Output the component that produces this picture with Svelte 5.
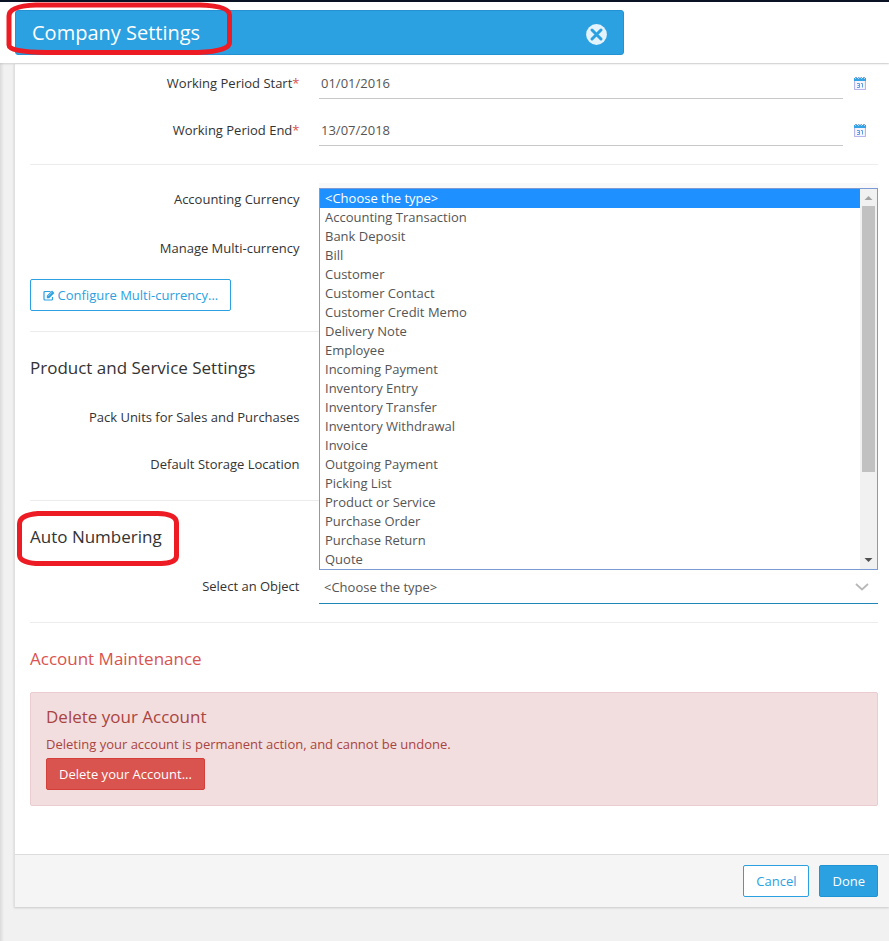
<script lang="ts">
  const objectTypes = [
    "<Choose the type>",
    "Accounting Transaction",
    "Bank Deposit",
    "Bill",
    "Customer",
    "Customer Contact",
    "Customer Credit Memo",
    "Delivery Note",
    "Employee",
    "Incoming Payment",
    "Inventory Entry",
    "Inventory Transfer",
    "Inventory Withdrawal",
    "Invoice",
    "Outgoing Payment",
    "Picking List",
    "Product or Service",
    "Purchase Order",
    "Purchase Return",
    "Quote",
  ];

  let selected = $state(objectTypes[0]);
  let periodStart = $state("01/01/2016");
  let periodEnd = $state("13/07/2018");
</script>

{#snippet calendar()}
  <svg class="calendar" width="12" height="13" viewBox="0 0 12 13" aria-hidden="true">
    <rect x="0.5" y="1.5" width="11" height="11" rx="0.5" fill="#f6f4fd" stroke="#b4b6ec" stroke-width="1.2" />
    <path d="M0 1h12v3H0z" fill="#36a3e4" />
    <path d="M1 1.5h10" stroke="#b5d6f2" stroke-dasharray="1 2" />
    <path d="M1 0.5h2M4 0.5h1.5M6.5 0.5h1.5M9 0.5h2" stroke="#7fa4d6" />
    <path d="M3 6.5h2.5v4H3M3.5 8.5h2M7 6.5h1.5v4" fill="none" stroke="#5f9fe2" />
  </svg>
{/snippet}

<div class="page">
  <header class="topbar">
    <div class="title-bar">
      <h1>Company Settings</h1>
      <button type="button" class="close" aria-label="Close">
        <svg width="21" height="21" viewBox="0 0 21 21">
          <circle cx="10.5" cy="10.5" r="10.4" fill="#e4f2fc" />
          <path d="M6 6l9 9M15 6l-9 9" stroke="#2ba1e1" stroke-width="3" stroke-linecap="round" />
        </svg>
      </button>
    </div>
    <svg class="marker marker-title" width="226" height="54" viewBox="0 0 226 54" aria-hidden="true">
      <path d="M30 3H194Q223.500 4 223.500 13V41Q223.500 49 192 50.500H40Q3 50 3 43V14Q3 4 30 3Z" />
    </svg>
  </header>

  <main class="panel">
    <div class="body">
      <div class="row">
        <label for="start">Working Period Start<i>*</i></label>
        <input id="start" bind:value={periodStart} />
        {@render calendar()}
      </div>
      <div class="row next">
        <label for="end">Working Period End<i>*</i></label>
        <input id="end" bind:value={periodEnd} />
        {@render calendar()}
      </div>

      <hr class="first" />

      <div class="row currency">
        <span class="label">Accounting Currency</span>
        <div class="select disabled"></div>
      </div>
      <div class="row multi">
        <span class="label">Manage Multi-currency</span>
      </div>
      <button type="button" class="btn outline configure">
        <svg width="12" height="11" viewBox="0 0 12 11" aria-hidden="true">
          <path d="M7.5 1.5H2Q1 1.5 1 2.5V9Q1 10 2 10H8.5Q9.5 10 9.5 9V7" fill="none" stroke="currentColor" stroke-width="1.2" />
          <path d="M3.8 5.8L9 0.6L11.4 3L6.2 8.2H3.8Z" fill="currentColor" />
          <path d="M5 6.2L9 2.2" stroke="#fff" stroke-width="0.5" />
        </svg>
        Configure Multi-currency...
      </button>

      <hr />

      <h2>Product and Service Settings</h2>
      <div class="row after-heading">
        <span class="label">Pack Units for Sales and Purchases</span>
      </div>
      <div class="row next">
        <span class="label">Default Storage Location</span>
      </div>

      <hr class="storage" />

      <h2 class="marked">
        Auto Numbering
        <svg class="marker marker-numbering" width="162" height="55" viewBox="0 0 162 55" aria-hidden="true">
          <path d="M21 2.5H141Q159.5 3 159.5 12V45Q159.5 52 144 52.5H19Q2.5 51 2.5 44V13Q2.5 4 21 2.5Z" />
        </svg>
      </h2>
      <div class="row after-heading">
        <span class="label">Select an Object</span>
        <div class="select active">
          <span>{selected}</span>
          <svg width="14" height="8" viewBox="0 0 14 8" aria-hidden="true">
            <path d="M1 1l6 5.5L13 1" fill="none" stroke="#b8b8b8" stroke-width="1.8" />
          </svg>
          <div class="dropdown">
            <ul role="listbox">
              {#each objectTypes as type}
                <li role="option" aria-selected={type === selected} class:selected={type === selected}>
                  {type}
                </li>
              {/each}
            </ul>
            <div class="scrollbar">
              <svg width="16" height="17" viewBox="0 0 16 17"><path d="M4.5 11h8L8.5 7z" fill="#a3a3a3" /></svg>
              <div class="thumb"></div>
              <svg width="16" height="17" viewBox="0 0 16 17"><path d="M4.5 6h8L8.5 10z" fill="#505050" /></svg>
            </div>
          </div>
        </div>
      </div>

      <hr class="object" />

      <h2 class="danger">Account Maintenance</h2>
      <section class="alert">
        <h3>Delete your Account</h3>
        <p>Deleting your account is permanent action, and cannot be undone.</p>
        <button type="button" class="btn delete">Delete your Account...</button>
      </section>
    </div>

    <footer>
      <button type="button" class="btn outline">Cancel</button>
      <button type="button" class="btn primary">Done</button>
    </footer>
  </main>
</div>

<style>
  :global(body) {
    margin: 0;
    background: #f1f1f1;
  }

  .page {
    box-sizing: border-box;
    height: 941px;
    overflow: hidden;
    background: linear-gradient(to right, #dadada, #f1f1f1 4px);
    color: #333;
    font: 13px/20px "Open Sans", sans-serif;
  }

  .topbar {
    position: relative;
    box-sizing: border-box;
    height: 63px;
    padding: 8px 0 0 15px;
    border-top: 2px solid #8e929c;
    border-image: linear-gradient(#091323 50%, #9da0a8 50%) 2;
    background: #fff;
    box-shadow: 0 1px 2px rgba(0, 0, 0, 0.14);
  }

  .title-bar {
    display: flex;
    align-items: center;
    justify-content: space-between;
    box-sizing: border-box;
    width: 609px;
    height: 45px;
    padding: 0 16px;
    border: 1px solid #2492d2;
    border-radius: 3px;
    background: #2ba1e1;
  }

  h1,
  h2,
  h3,
  p {
    margin: 0;
    font-weight: 400;
  }

  h1 {
    color: #fff;
    font-size: 20px;
    line-height: 28px;
  }

  .close {
    display: flex;
    padding: 4px 0 0;
    border: 0;
    background: none;
  }

  .marker {
    position: absolute;
    fill: none;
    stroke: #ed1c24;
    stroke-width: 5;
    pointer-events: none;
  }

  .marker-title {
    top: 0;
    left: 6px;
  }

  .marker-numbering {
    top: -14px;
    left: -13px;
  }

  .panel {
    margin: 1px 0 0 14px;
    border-left: 1px solid #e0e0e0;
    background: #fff;
    box-shadow: 0 1px 2px rgba(0, 0, 0, 0.16);
  }

  .body {
    box-sizing: border-box;
    height: 790px;
    padding: 0 11px 0 15px;
  }

  .row {
    display: flex;
    align-items: center;
    height: 39px;
  }

  .row.next {
    margin-top: 8px;
  }

  .row.currency {
    margin-top: 15px;
  }

  .row.multi {
    margin-top: 10px;
  }

  .row.after-heading {
    margin-top: 18px;
  }

  label,
  .label {
    flex: none;
    width: 269.5px;
    margin-right: 19.5px;
    padding-bottom: 2px;
    text-align: right;
  }

  i {
    color: #d9534f;
    font-style: normal;
  }

  input {
    box-sizing: border-box;
    width: 524px;
    height: 31px;
    padding: 0 2px;
    border: 0;
    border-bottom: 1px solid #c8c8c8;
    outline: 0;
    background: none;
    color: #555;
    font: inherit;
  }

  .calendar {
    margin-left: 11px;
  }

  .select {
    position: relative;
    display: flex;
    align-items: center;
    justify-content: space-between;
    box-sizing: border-box;
    flex: 1;
    height: 34px;
    padding: 1px 9px 0 5px;
    color: #555;
  }

  .disabled {
    background: #f9f9f9;
  }

  .active {
    border-bottom: 1px solid #2187b8;
  }

  .dropdown {
    position: absolute;
    right: 0;
    bottom: 100%;
    left: 0;
    display: flex;
    border: 1px solid #7a9bd4;
    background: #fff;
  }

  ul {
    flex: 1;
    margin: 0;
    padding: 0;
    list-style: none;
  }

  li {
    height: 19px;
    padding-left: 5px;
    line-height: 19px;
  }

  li.selected {
    background: #1e90ff;
    color: #fff;
  }

  .scrollbar {
    display: flex;
    flex-direction: column;
    justify-content: space-between;
    width: 17px;
    background: #f1f1f1;
  }

  .thumb {
    width: 13px;
    height: 266px;
    margin: 0 2px auto;
    background: #c1c1c1;
  }

  hr {
    height: 1px;
    margin: 20px 0 24px;
    border: 0;
    background: #ececec;
  }

  hr.first {
    margin: 14px 0 0;
  }

  hr.storage,
  hr.object {
    margin-top: 16px;
  }

  h2,
  h3 {
    font-size: 17px;
    line-height: 24px;
  }

  .marked {
    position: relative;
  }

  .danger {
    color: #d9534f;
  }

  .btn {
    box-sizing: border-box;
    height: 32px;
    padding: 0 12px;
    border: 1px solid #2ba1e1;
    border-radius: 2px;
    font: inherit;
  }

  .outline {
    background: #fff;
    color: #2ba1e1;
  }

  .primary {
    border-color: #1f94d5;
    background: #2ba1e1;
    color: #fff;
  }

  .configure {
    display: flex;
    align-items: center;
    gap: 2.5px;
    width: 201px;
    margin-top: 11px;
    padding-right: 0;
    white-space: nowrap;
  }

  .alert {
    box-sizing: border-box;
    height: 114px;
    margin-top: 21px;
    padding: 12px 15px;
    border: 1px solid #ebccd1;
    border-radius: 2px;
    background: #f2dede;
    color: #a94442;
  }

  .alert p {
    margin: 5px 0 4px;
  }

  .delete {
    display: block;
    border-color: #d43f3a;
    background: #d9534f;
    color: #fff;
  }

  footer {
    display: flex;
    justify-content: flex-end;
    gap: 10px;
    box-sizing: border-box;
    height: 53px;
    padding: 10px 11px;
    border-top: 1px solid #dcdcdc;
    background: #f5f5f5;
  }
</style>
